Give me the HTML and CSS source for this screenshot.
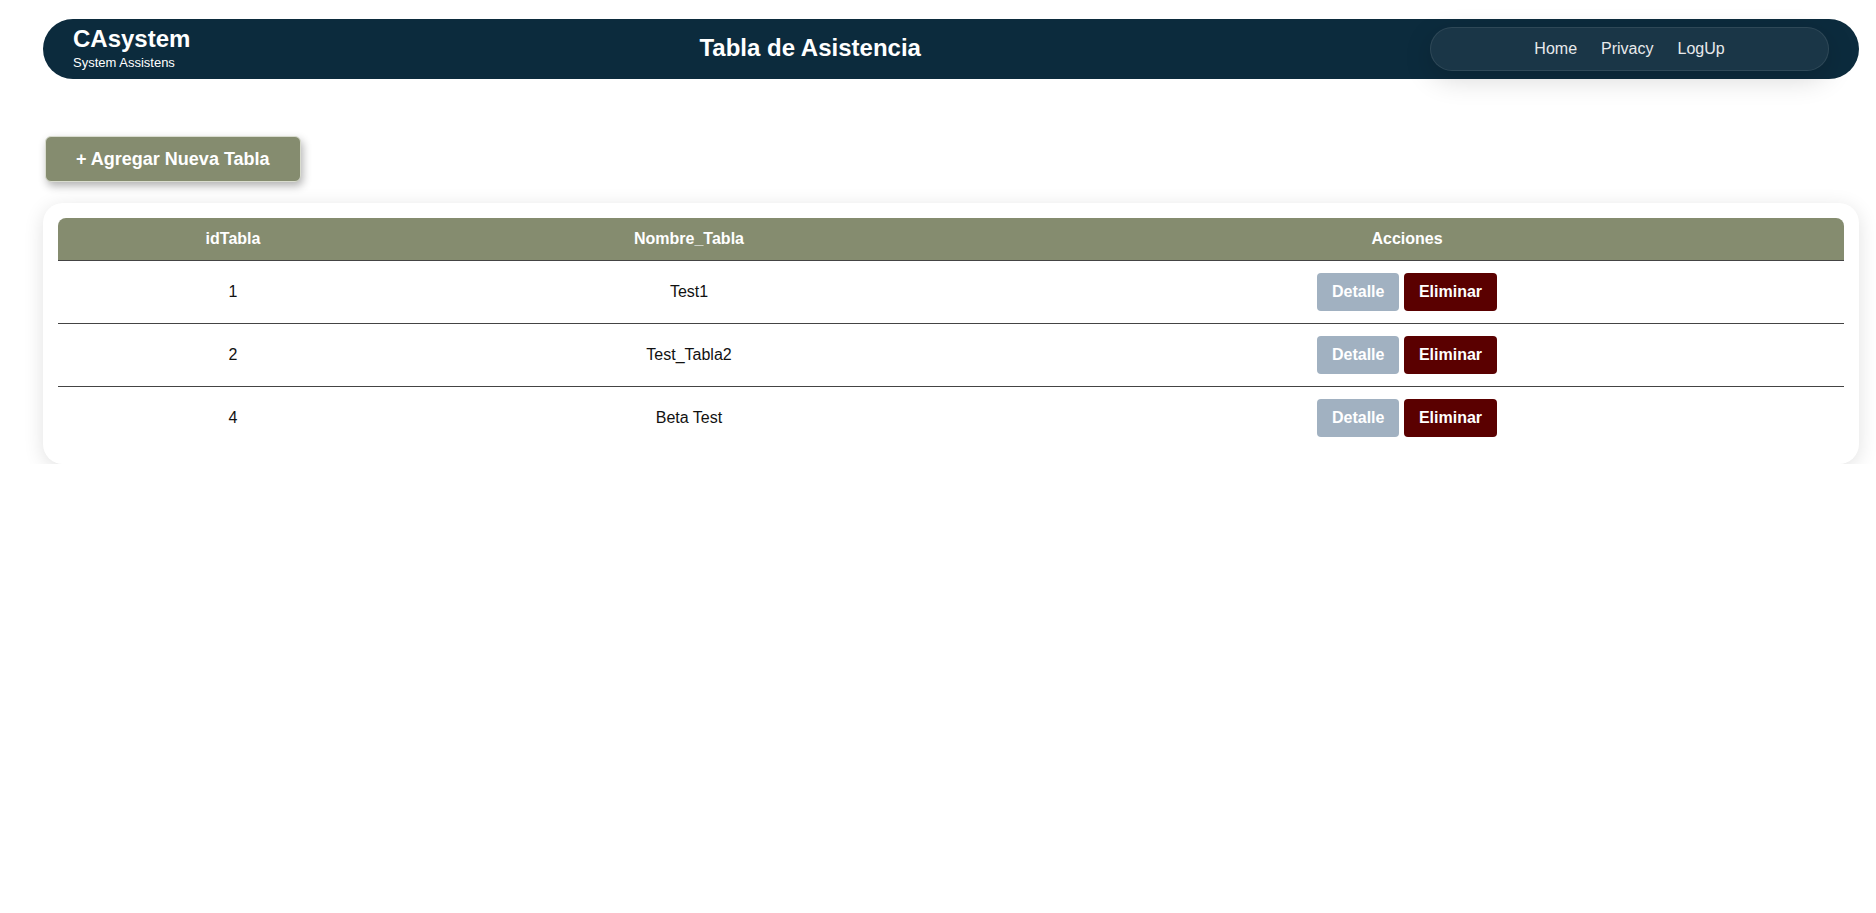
FILE: index.html
```html
<!DOCTYPE html>
<html lang="es">
<head>
<meta charset="utf-8">
<title>Tabla de Asistencia</title>
<link rel="stylesheet" href="styles.css">
</head>
<body>
<div class="page">
  <header class="topbar">
    <div class="brand">
      <div class="brand-name">CAsystem</div>
      <div class="brand-sub">System Assistens</div>
    </div>
    <h1 class="page-title">Tabla de Asistencia</h1>
    <nav class="nav">
      <a class="nav-link" href="#">Home</a>
      <a class="nav-link" href="#">Privacy</a>
      <a class="nav-link" href="#">LogUp</a>
    </nav>
  </header>

  <main class="content">
    <button class="btn-add">+ Agregar Nueva Tabla</button>

    <section class="card">
      <table class="data-table">
        <thead>
          <tr>
            <th class="col-id">idTabla</th>
            <th class="col-name">Nombre_Tabla</th>
            <th class="col-actions">Acciones</th>
          </tr>
        </thead>
        <tbody>
          <tr>
            <td>1</td>
            <td>Test1</td>
            <td><button class="btn btn-detail">Detalle</button> <button class="btn btn-delete">Eliminar</button></td>
          </tr>
          <tr>
            <td>2</td>
            <td>Test_Tabla2</td>
            <td><button class="btn btn-detail">Detalle</button> <button class="btn btn-delete">Eliminar</button></td>
          </tr>
          <tr>
            <td>4</td>
            <td>Beta Test</td>
            <td><button class="btn btn-detail">Detalle</button> <button class="btn btn-delete">Eliminar</button></td>
          </tr>
        </tbody>
      </table>
    </section>
  </main>
</div>
</body>
</html>
```

FILE: styles.css
```css
* { box-sizing: border-box; }

body {
  margin: 0;
  background: #ffffff;
  font-family: "Liberation Sans", Arial, sans-serif;
  color: #222;
}

.page {
  padding: 19px 17px 0 43px;
}

.topbar {
  height: 60px;
  background: #0c2b3d;
  border-radius: 30px;
  display: flex;
  align-items: center;
  justify-content: space-between;
  padding: 0 30px;
}

.brand {
  color: #fff;
  min-width: 116px;
  margin-top: -1px;
}

.brand-name {
  font-size: 24px;
  font-weight: bold;
  line-height: 26px;
}

.brand-sub {
  font-size: 13px;
  line-height: 16px;
  margin-top: 3px;
}

.page-title {
  margin: 0;
  color: #fff;
  font-size: 24px;
  font-weight: bold;
  line-height: 28px;
  margin-top: -2px;
}

.nav {
  width: 399px;
  height: 44px;
  border-radius: 22px;
  background: #1a3647;
  border: 1px solid rgba(255, 255, 255, 0.09);
  box-shadow: 0 8px 28px rgba(0, 0, 0, 0.16);
  display: flex;
  align-items: center;
  justify-content: center;
  gap: 24px;
}

.nav-link {
  color: #e8eaec;
  text-decoration: none;
  font-size: 16px;
}

.content {
  padding-top: 57px;
}

.btn-add {
  display: block;
  margin-left: 2px;
  background: #858c6f;
  color: #fff;
  font-family: "Liberation Sans", Arial, sans-serif;
  font-size: 18px;
  font-weight: bold;
  line-height: 20px;
  padding: 12px 30px;
  border: 1px solid #d9dccf;
  border-radius: 6px;
  box-shadow: 2px 4px 9px rgba(0, 0, 0, 0.3);
}

.card {
  margin-top: 21px;
  background: #fff;
  border-radius: 20px;
  padding: 15px;
  box-shadow: 0 4px 20px rgba(0, 0, 0, 0.12);
}

.data-table {
  width: 100%;
  border-collapse: separate;
  border-spacing: 0;
  font-size: 16px;
}

.data-table th {
  background: #858c6f;
  color: #fff;
  font-weight: bold;
  font-size: 16px;
  line-height: 18px;
  padding: 12px;
  border-bottom: 1px solid #444;
  text-align: center;
}

.data-table th.col-id { width: 350px; border-top-left-radius: 8px; }
.data-table th.col-name { width: 562px; }
.data-table th.col-actions { border-top-right-radius: 8px; }

.data-table td {
  text-align: center;
  padding: 12px;
  line-height: 38px;
  border-bottom: 1px solid #444;
  color: #111;
}

.data-table tbody tr:last-child td {
  border-bottom: none;
}

.btn {
  display: inline-block;
  vertical-align: top;
  font-family: "Liberation Sans", Arial, sans-serif;
  font-size: 16px;
  font-weight: bold;
  line-height: 20px;
  padding: 9px 15px;
  border: none;
  border-radius: 4px;
  color: #fff;
}

.btn-detail { background: #a1b1c1; }
.btn-delete { background: #5a0000; }
```
